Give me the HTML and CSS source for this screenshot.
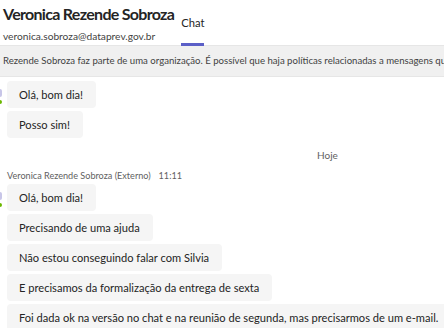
FILE: index.html
```html
<!DOCTYPE html>
<html lang="pt">
<head>
<meta charset="utf-8">
<link rel="stylesheet" href="styles.css">
</head>
<body>
<div class="header">
  <div class="who">
    <div class="name">Veronica Rezende Sobroza</div>
    <div class="email">veronica.sobroza@dataprev.gov.br</div>
  </div>
  <div class="tab">Chat</div>
</div>
<div class="banner">Rezende Sobroza faz parte de uma organização. É possível que haja políticas relacionadas a mensagens que</div>
<div class="messages">
  <div class="group first">
    <span class="presence"></span>
    <div class="bubble">Olá, bom dia!</div>
    <div class="bubble">Posso sim!</div>
  </div>
  <div class="day">Hoje</div>
  <div class="sender">Veronica Rezende Sobroza (Externo)<span class="time">11:11</span></div>
  <div class="group">
    <span class="presence second"></span>
    <div class="bubble">Olá, bom dia!</div>
    <div class="bubble">Precisando de uma ajuda</div>
    <div class="bubble">Não estou conseguindo falar com Silvia</div>
    <div class="bubble">E precisamos da formalização da entrega de sexta</div>
    <div class="bubble">Foi dada ok na versão no chat e na reunião de segunda, mas precisarmos de um e-mail.</div>
  </div>
</div>
</body>
</html>
```
FILE: styles.css
```css
html, body {
  margin: 0;
  padding: 0;
  background: #ffffff;
  width: 444px;
  height: 328px;
  overflow: hidden;
  font-family: Lato, "Open Sans", sans-serif;
  color: #242424;
}

.header {
  display: flex;
  align-items: flex-start;
  height: 46px;
  border-bottom: 1px solid #e6e6e6;
  padding-left: 3px;
  box-sizing: border-box;
}

.who {
  display: flex;
  flex-direction: column;
  padding-top: 3px;
}

.name {
  font-size: 16px;
  font-weight: 700;
  line-height: 22px;
  letter-spacing: -0.7px;
  color: #242424;
}

.email {
  font-size: 10.2px;
  line-height: 14px;
  margin-top: 4px;
  color: #424242;
}

.tab {
  margin-left: 7px;
  margin-top: 16px;
  font-size: 11.2px;
  line-height: 13px;
  color: #242424;
  padding-bottom: 13px;
  border-bottom: 3px solid #5b5fc7;
  box-sizing: border-box;
  height: 30px;
}

.banner {
  height: 31px;
  background: #f0f0f0;
  border-bottom: 1px solid #e6e6e6;
  box-sizing: border-box;
  padding-left: 3px;
  font-size: 9.6px;
  line-height: 30px;
  white-space: nowrap;
  overflow: hidden;
  color: #424242;
}

.messages {
  padding-left: 7px;
  font-size: 11.1px;
}

.group {
  position: relative;
  display: flex;
  flex-direction: column;
  align-items: flex-start;
  gap: 3px;
}

.group.first {
  margin-top: 4px;
}

.presence {
  position: absolute;
  left: -7px;
  top: 19px;
  width: 2px;
  height: 4px;
  background: #6bb700;
  border-radius: 0 2px 2px 0;
}

.presence::before {
  content: "";
  position: absolute;
  left: 0;
  top: -11px;
  width: 2px;
  height: 8px;
  background: #c8c6e8;
  border-radius: 0 2px 2px 0;
}

.bubble {
  background: #f5f5f5;
  border-radius: 4px;
  height: 27px;
  line-height: 27px;
  padding: 0 13px 0 12px;
  white-space: nowrap;
  color: #242424;
}

.day {
  margin-top: 10px;
  padding-left: 310px;
  font-size: 10px;
  line-height: 14px;
  color: #616161;
}

.sender {
  margin-top: 8px;
  font-size: 9.1px;
  line-height: 12px;
  margin-bottom: 2px;
  color: #616161;
  white-space: nowrap;
}

.time {
  margin-left: 8px;
}
```
